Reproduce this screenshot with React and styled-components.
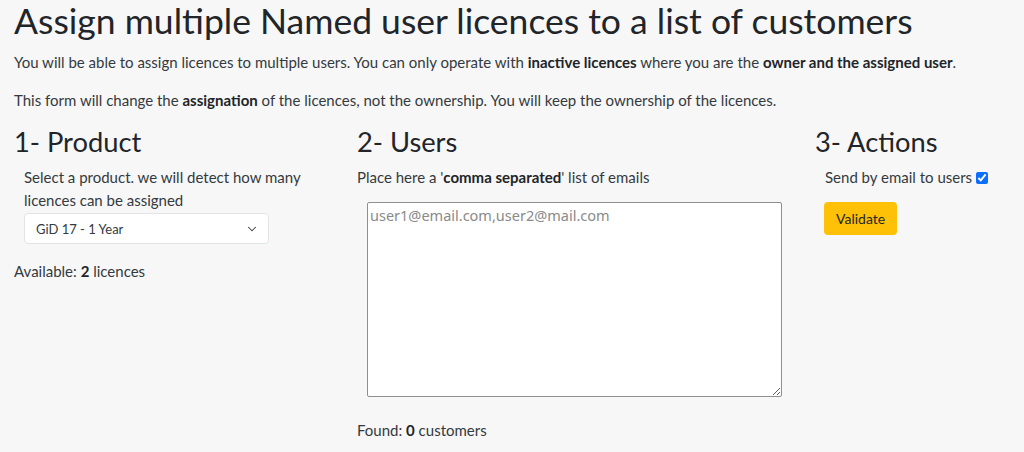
import React from 'react';
import styled, { createGlobalStyle } from 'styled-components';
import { ChevronDown } from 'lucide-react';

const GlobalStyle = createGlobalStyle`
  html, body {
    margin: 0;
    padding: 0;
    background: #f7f7f7;
  }
  body {
    font-family: Lato, "Open Sans", sans-serif;
    color: #343a40;
  }
  * {
    box-sizing: border-box;
  }
`;

const Page = styled.div`
  padding: 0 14px;
`;

const Title = styled.h1`
  margin: 0 0 10px;
  font-size: 35.5px;
  line-height: 41px;
  font-weight: 400;
  color: #212529;
`;

const Intro = styled.p`
  margin: 0 0 16px;
  font-size: 15px;
  line-height: 22px;
  color: #343a40;

  b {
    font-weight: 700;
    color: #212529;
  }
`;

const Columns = styled.div`
  display: grid;
  grid-template-columns: 343px 458px 1fr;
  margin-top: -1px;
`;

const Column = styled.section`
  display: flex;
  flex-direction: column;
  align-items: flex-start;
`;

const SectionTitle = styled.h2`
  margin: 0 0 8px;
  font-size: 27.3px;
  line-height: 32px;
  font-weight: 400;
  color: #212529;
`;

const Hint = styled.div`
  font-size: 15px;
  line-height: 23px;
  padding-left: ${(p) => (p.$indent ? '10px' : '0')};
  max-width: ${(p) => p.$max || 'none'};
  color: #343a40;

  b {
    font-weight: 700;
    color: #212529;
  }
`;

const SelectBox = styled.div`
  margin: 1px 0 0 10px;
  width: 245px;
  height: 31px;
  padding: 0 9px 0 11px;
  display: flex;
  align-items: center;
  justify-content: space-between;
  background: #fff;
  border: 1px solid #e2e5e8;
  border-radius: 4px;
  font-size: 13px;
  color: #343a40;
`;

const Count = styled.div`
  margin-top: 16px;
  font-size: 15px;
  line-height: 22px;
  color: #343a40;

  b {
    font-weight: 700;
    color: #212529;
  }
`;

const EmailArea = styled.textarea`
  margin: 13px 0 0 10px;
  width: 415px;
  height: 195px;
  padding: 2px 2px;
  border: 1px solid #8f8f8f;
  border-radius: 2px;
  background: #fff;
  font-family: "Noto Sans", "Liberation Sans", sans-serif;
  font-size: 14.5px;
  line-height: 20px;
  resize: vertical;
  outline: none;

  &::placeholder {
    color: #8a8a8a;
  }
`;

const Found = styled(Count)`
  margin-top: 22px;
`;

const CheckRow = styled.label`
  display: flex;
  align-items: center;
  gap: 4px;
  padding-left: 10px;
  font-size: 15px;
  line-height: 23px;
  color: #343a40;

  input {
    margin: 0;
    width: 12px;
    height: 12px;
    accent-color: #0d6efd;
  }
`;

const ValidateButton = styled.button`
  margin: 13px 0 0 9px;
  height: 33px;
  padding: 0 12px;
  border: none;
  border-radius: 4px;
  background: #ffc107;
  color: #212529;
  font-family: Lato, "Open Sans", sans-serif;
  font-size: 14px;
  cursor: pointer;
`;

export default function App() {
  return (
    <Page>
      <GlobalStyle />
      <Title>Assign multiple Named user licences to a list of customers</Title>
      <Intro>
        You will be able to assign licences to multiple users. You can only operate with{' '}
        <b>inactive licences</b> where you are the <b>owner and the assigned user</b>.
      </Intro>
      <Intro>
        This form will change the <b>assignation</b> of the licences, not the ownership. You will keep
        the ownership of the licences.
      </Intro>

      <Columns>
        <Column>
          <SectionTitle>1- Product</SectionTitle>
          <Hint $indent $max="300px">
            Select a product. we will detect how many licences can be assigned
          </Hint>
          <SelectBox>
            <span>GiD 17 - 1 Year</span>
            <ChevronDown size={14} strokeWidth={1.75} color="#343a40" />
          </SelectBox>
          <Count>
            Available: <b>2</b> licences
          </Count>
        </Column>

        <Column>
          <SectionTitle>2- Users</SectionTitle>
          <Hint>
            Place here a '<b>comma separated</b>' list of emails
          </Hint>
          <EmailArea placeholder="user1@email.com,user2@mail.com" />
          <Found>
            Found: <b>0</b> customers
          </Found>
        </Column>

        <Column>
          <SectionTitle>3- Actions</SectionTitle>
          <CheckRow>
            Send by email to users <input type="checkbox" defaultChecked />
          </CheckRow>
          <ValidateButton type="button">Validate</ValidateButton>
        </Column>
      </Columns>
    </Page>
  );
}
